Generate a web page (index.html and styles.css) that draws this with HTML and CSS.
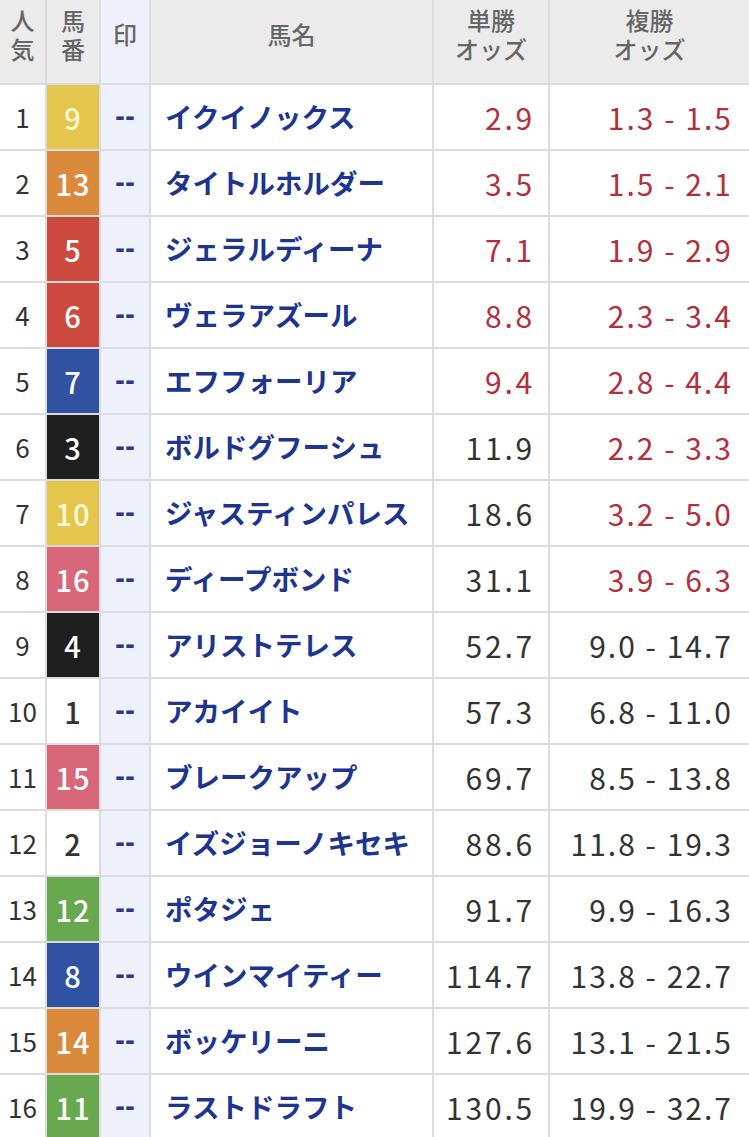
FILE: index.html
```html
<!DOCTYPE html>
<html lang="ja">
<head>
<meta charset="utf-8">
<link rel="stylesheet" href="styles.css">
</head>
<body>
<div class="odds-table">
  <div class="row head">
    <div class="c rank"><span>人<br>気</span></div>
    <div class="c num"><span>馬<br>番</span></div>
    <div class="c mark">印</div>
    <div class="c name">馬名</div>
    <div class="c win"><span>単勝<br>オッズ</span></div>
    <div class="c place"><span>複勝<br>オッズ</span></div>
  </div>

  <div class="row"><div class="c rank">1</div><div class="c num f5">9</div><div class="c mark">--</div><div class="c name">イクイノックス</div><div class="c win red">2.9</div><div class="c place red">1.3 - 1.5</div></div>
  <div class="row"><div class="c rank">2</div><div class="c num f7">13</div><div class="c mark">--</div><div class="c name">タイトルホルダー</div><div class="c win red">3.5</div><div class="c place red">1.5 - 2.1</div></div>
  <div class="row"><div class="c rank">3</div><div class="c num f3">5</div><div class="c mark">--</div><div class="c name">ジェラルディーナ</div><div class="c win red">7.1</div><div class="c place red">1.9 - 2.9</div></div>
  <div class="row"><div class="c rank">4</div><div class="c num f3">6</div><div class="c mark">--</div><div class="c name">ヴェラアズール</div><div class="c win red">8.8</div><div class="c place red">2.3 - 3.4</div></div>
  <div class="row"><div class="c rank">5</div><div class="c num f4">7</div><div class="c mark">--</div><div class="c name">エフフォーリア</div><div class="c win red">9.4</div><div class="c place red">2.8 - 4.4</div></div>
  <div class="row"><div class="c rank">6</div><div class="c num f2">3</div><div class="c mark">--</div><div class="c name">ボルドグフーシュ</div><div class="c win">11.9</div><div class="c place red">2.2 - 3.3</div></div>
  <div class="row"><div class="c rank">7</div><div class="c num f5">10</div><div class="c mark">--</div><div class="c name">ジャスティンパレス</div><div class="c win">18.6</div><div class="c place red">3.2 - 5.0</div></div>
  <div class="row"><div class="c rank">8</div><div class="c num f8">16</div><div class="c mark">--</div><div class="c name">ディープボンド</div><div class="c win">31.1</div><div class="c place red">3.9 - 6.3</div></div>
  <div class="row"><div class="c rank">9</div><div class="c num f2">4</div><div class="c mark">--</div><div class="c name">アリストテレス</div><div class="c win">52.7</div><div class="c place">9.0 - 14.7</div></div>
  <div class="row"><div class="c rank">10</div><div class="c num f1">1</div><div class="c mark">--</div><div class="c name">アカイイト</div><div class="c win">57.3</div><div class="c place">6.8 - 11.0</div></div>
  <div class="row"><div class="c rank">11</div><div class="c num f8">15</div><div class="c mark">--</div><div class="c name">ブレークアップ</div><div class="c win">69.7</div><div class="c place">8.5 - 13.8</div></div>
  <div class="row"><div class="c rank">12</div><div class="c num f1">2</div><div class="c mark">--</div><div class="c name">イズジョーノキセキ</div><div class="c win">88.6</div><div class="c place">11.8 - 19.3</div></div>
  <div class="row"><div class="c rank">13</div><div class="c num f6">12</div><div class="c mark">--</div><div class="c name">ポタジェ</div><div class="c win">91.7</div><div class="c place">9.9 - 16.3</div></div>
  <div class="row"><div class="c rank">14</div><div class="c num f4">8</div><div class="c mark">--</div><div class="c name">ウインマイティー</div><div class="c win">114.7</div><div class="c place">13.8 - 22.7</div></div>
  <div class="row"><div class="c rank">15</div><div class="c num f7">14</div><div class="c mark">--</div><div class="c name">ボッケリーニ</div><div class="c win">127.6</div><div class="c place">13.1 - 21.5</div></div>
  <div class="row"><div class="c rank">16</div><div class="c num f6">11</div><div class="c mark">--</div><div class="c name">ラストドラフト</div><div class="c win">130.5</div><div class="c place">19.9 - 32.7</div></div>
</div>
</body>
</html>
```

FILE: styles.css
```css
html, body {
  margin: 0;
  padding: 0;
  background: #ffffff;
}

body {
  font-family: "Noto Sans CJK JP", "Noto Sans", sans-serif;
  overflow: hidden;
}

.odds-table {
  display: flex;
  flex-direction: column;
  gap: 2px;
  background: #dcdcdc;
  width: 749px;
}

.row {
  display: grid;
  grid-template-columns: 45px 52px 48px 281px 114px 199px;
  column-gap: 2px;
  height: 64px;
}

.row.head {
  height: 83px;
}

.c {
  display: flex;
  align-items: center;
  background: #ffffff;
  color: #333333;
  line-height: 1;
  white-space: nowrap;
}

.head .c {
  background: #ebebeb;
  color: #666666;
  font-family: "Noto Sans CJK JP", sans-serif;
  font-size: 24px;
  font-weight: 500;
  letter-spacing: 0;
  word-spacing: 0;
  justify-content: center;
  text-align: center;
  line-height: 29px;
  padding: 0 0 16px 0;
}

.rank {
  justify-content: center;
  font-size: 26px;
  color: #333333;
}

.num {
  justify-content: center;
  font-size: 29px;
  font-weight: 500;
  color: #333333;
  letter-spacing: 1px;
}

.mark {
  justify-content: center;
  color: #2b3a86;
  font-family: "DejaVu Sans", sans-serif;
  font-size: 24px;
  font-weight: 700;
}

.c.mark {
  background: #eef1fb;
}

.name {
  padding-left: 14px;
  font-size: 27.5px;
  font-weight: 700;
  color: #1d3590;
}

.win,
.place {
  justify-content: flex-end;
  font-size: 30px;
  color: #333333;
}

.win {
  padding-right: 13px;
  letter-spacing: 2.8px;
}

.place {
  padding-right: 16px;
  letter-spacing: 2px;
  word-spacing: 0;
}

.red {
  color: #b3303a;
}

.f1 { background: #ffffff; color: #333333; }
.f2 { background: #1f1f1f; color: #ffffff; }
.f3 { background: #cc4a40; color: #ffffff; }
.f4 { background: #3152a3; color: #ffffff; }
.f5 { background: #e4c64c; color: #fff9d8; }
.f6 { background: #68a84f; color: #ffffff; }
.f7 { background: #db8a3c; color: #ffffff; }
.f8 { background: #d8677a; color: #ffffff; }
```
